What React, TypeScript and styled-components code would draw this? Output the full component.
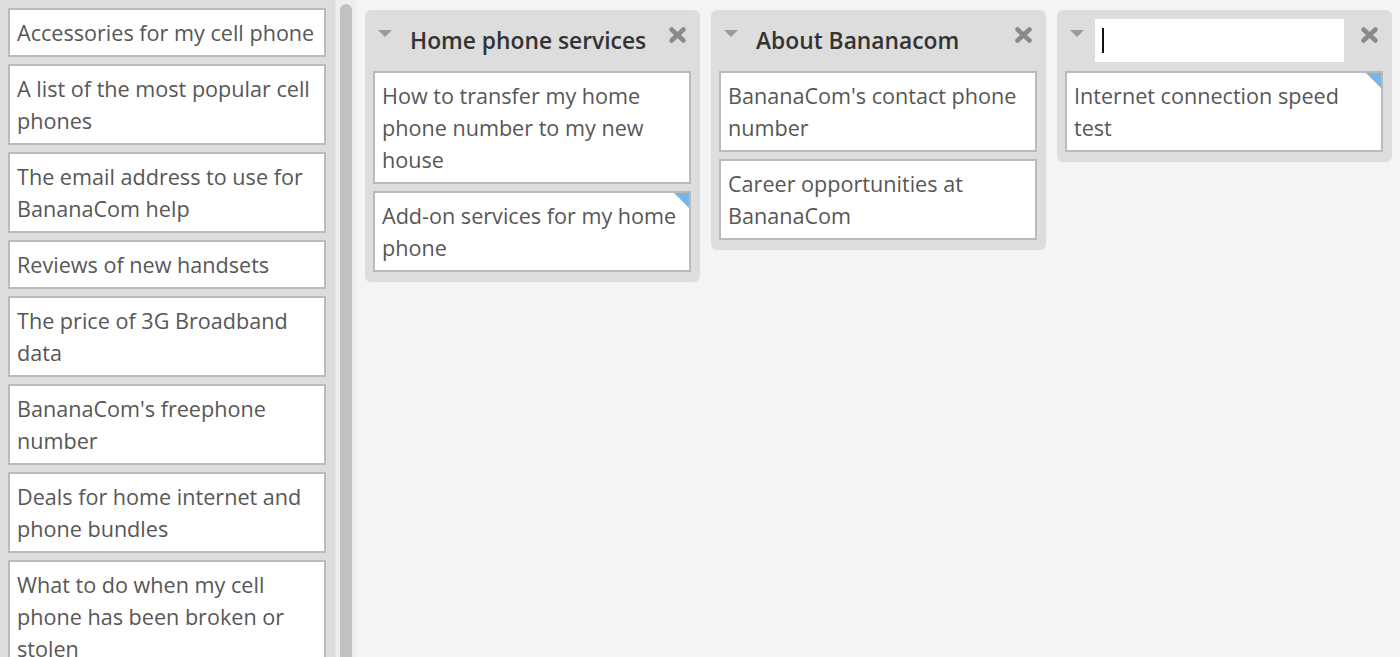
import React from "react";
import styled, { createGlobalStyle } from "styled-components";

const GlobalStyle = createGlobalStyle`
    html, body {
        margin: 0;
        padding: 0;
        height: 100%;
        overflow: hidden;
    }
    body {
        font-family: "Open Sans", "Noto Sans", sans-serif;
        background: #f4f4f4;
    }
`;

interface Topic {
    text: string;
    flagged?: boolean;
}

interface Group {
    title?: string;
    editing?: boolean;
    topics: Topic[];
}

const sidebarTopics = [
    "Accessories for my cell phone",
    "A list of the most popular cell phones",
    "The email address to use for BananaCom help",
    "Reviews of new handsets",
    "The price of 3G Broadband data",
    "BananaCom's freephone number",
    "Deals for home internet and phone bundles",
    "What to do when my cell phone has been broken or stolen",
];

const groups: Group[] = [
    {
        title: "Home phone services",
        topics: [
            { text: "How to transfer my home phone number to my new house" },
            { text: "Add-on services for my home phone", flagged: true },
        ],
    },
    {
        title: "About Bananacom",
        topics: [
            { text: "BananaCom's contact phone number" },
            { text: "Career opportunities at BananaCom" },
        ],
    },
    {
        editing: true,
        topics: [{ text: "Internet connection speed test", flagged: true }],
    },
];

const Layout = styled.div`
    display: flex;
    height: 657px;
    overflow: hidden;
`;

const Sidebar = styled.div`
    width: 335px;
    flex-shrink: 0;
    box-sizing: border-box;
    background: #dddddd;
    padding: 8px 9px 0 8px;
    display: flex;
    flex-direction: column;
    gap: 7px;
    overflow: hidden;
`;

const ScrollTrack = styled.div`
    width: 21px;
    flex-shrink: 0;
    background: #eeeeee;
    border-left: 1px solid #e6e6e6;
    box-sizing: border-box;
    padding: 4px 4px 0 4px;
`;

const ScrollThumb = styled.div`
    height: 100%;
    background: #c1c1c1;
    border-radius: 6px 6px 0 0;
`;

const Board = styled.div`
    flex: 1;
    display: flex;
    align-items: flex-start;
    gap: 11px;
    padding: 10px 9px;
    background: #f4f4f4;
`;

const Card = styled.div<{ $flagged?: boolean }>`
    position: relative;
    flex-shrink: 0;
    background: #ffffff;
    border: 2px solid #bababa;
    padding: 7px 5px 6px 7px;
    font-size: 21.6px;
    line-height: 32px;
    color: #575757;
    overflow: hidden;

    &::after {
        content: "";
        display: ${(p) => (p.$flagged ? "block" : "none")};
        position: absolute;
        top: 0;
        right: 0;
        width: 0;
        height: 0;
        border-top: 15px solid #7ab2ea;
        border-left: 15px solid transparent;
    }
`;

const Column = styled.div`
    width: 335px;
    flex-shrink: 0;
    box-sizing: border-box;
    background: #dddddd;
    border-radius: 6px;
    padding: 0 9px 10px 8px;
    display: flex;
    flex-direction: column;
    gap: 7px;
`;

const Header = styled.div`
    display: flex;
    align-items: flex-start;
    padding: 9px 4px 2px 5px;
`;

const Caret = styled.div`
    flex-shrink: 0;
    width: 0;
    height: 0;
    margin-top: 11px;
    margin-right: 11px;
    border-left: 7px solid transparent;
    border-right: 7px solid transparent;
    border-top: 7px solid #9a9a9a;
`;

const Title = styled.div`
    flex: 1;
    padding-left: 7px;
    height: 43px;
    font-size: 22.8px;
    font-weight: 600;
    line-height: 44px;
    color: #333333;
    white-space: nowrap;
`;

const TitleInput = styled.div`
    width: 249px;
    height: 43px;
    background: #ffffff;
    box-sizing: border-box;
    padding: 9px 7px;
    display: flex;
    align-items: stretch;
`;

const Cursor = styled.div`
    width: 2px;
    background: #111111;
`;

const Spacer = styled.div`
    flex: 1;
`;

const CloseButton = styled.div`
    flex-shrink: 0;
    margin-top: 7px;
    width: 19px;
    height: 18px;
    display: flex;
`;

const CloseIcon = () => (
    <svg width="19" height="18" viewBox="0 0 19 18">
        <path
            d="M3.5 3.5 L15.5 14.5 M15.5 3.5 L3.5 14.5"
            stroke="#8a8a8a"
            strokeWidth="4.5"
            strokeLinecap="round"
        />
    </svg>
);

const App: React.FC = () => {
    return (
        <>
            <GlobalStyle />
            <Layout>
                <Sidebar>
                    {sidebarTopics.map((t) => (
                        <Card key={t}>{t}</Card>
                    ))}
                </Sidebar>
                <ScrollTrack>
                    <ScrollThumb />
                </ScrollTrack>
                <Board>
                    {groups.map((g, i) => (
                        <Column key={i}>
                            <Header>
                                <Caret />
                                {g.editing ? (
                                    <>
                                        <TitleInput>
                                            <Cursor />
                                        </TitleInput>
                                        <Spacer />
                                    </>
                                ) : (
                                    <Title>{g.title}</Title>
                                )}
                                <CloseButton>
                                    <CloseIcon />
                                </CloseButton>
                            </Header>
                            {g.topics.map((t) => (
                                <Card key={t.text} $flagged={t.flagged}>
                                    {t.text}
                                </Card>
                            ))}
                        </Column>
                    ))}
                </Board>
            </Layout>
        </>
    );
};

export default App;
